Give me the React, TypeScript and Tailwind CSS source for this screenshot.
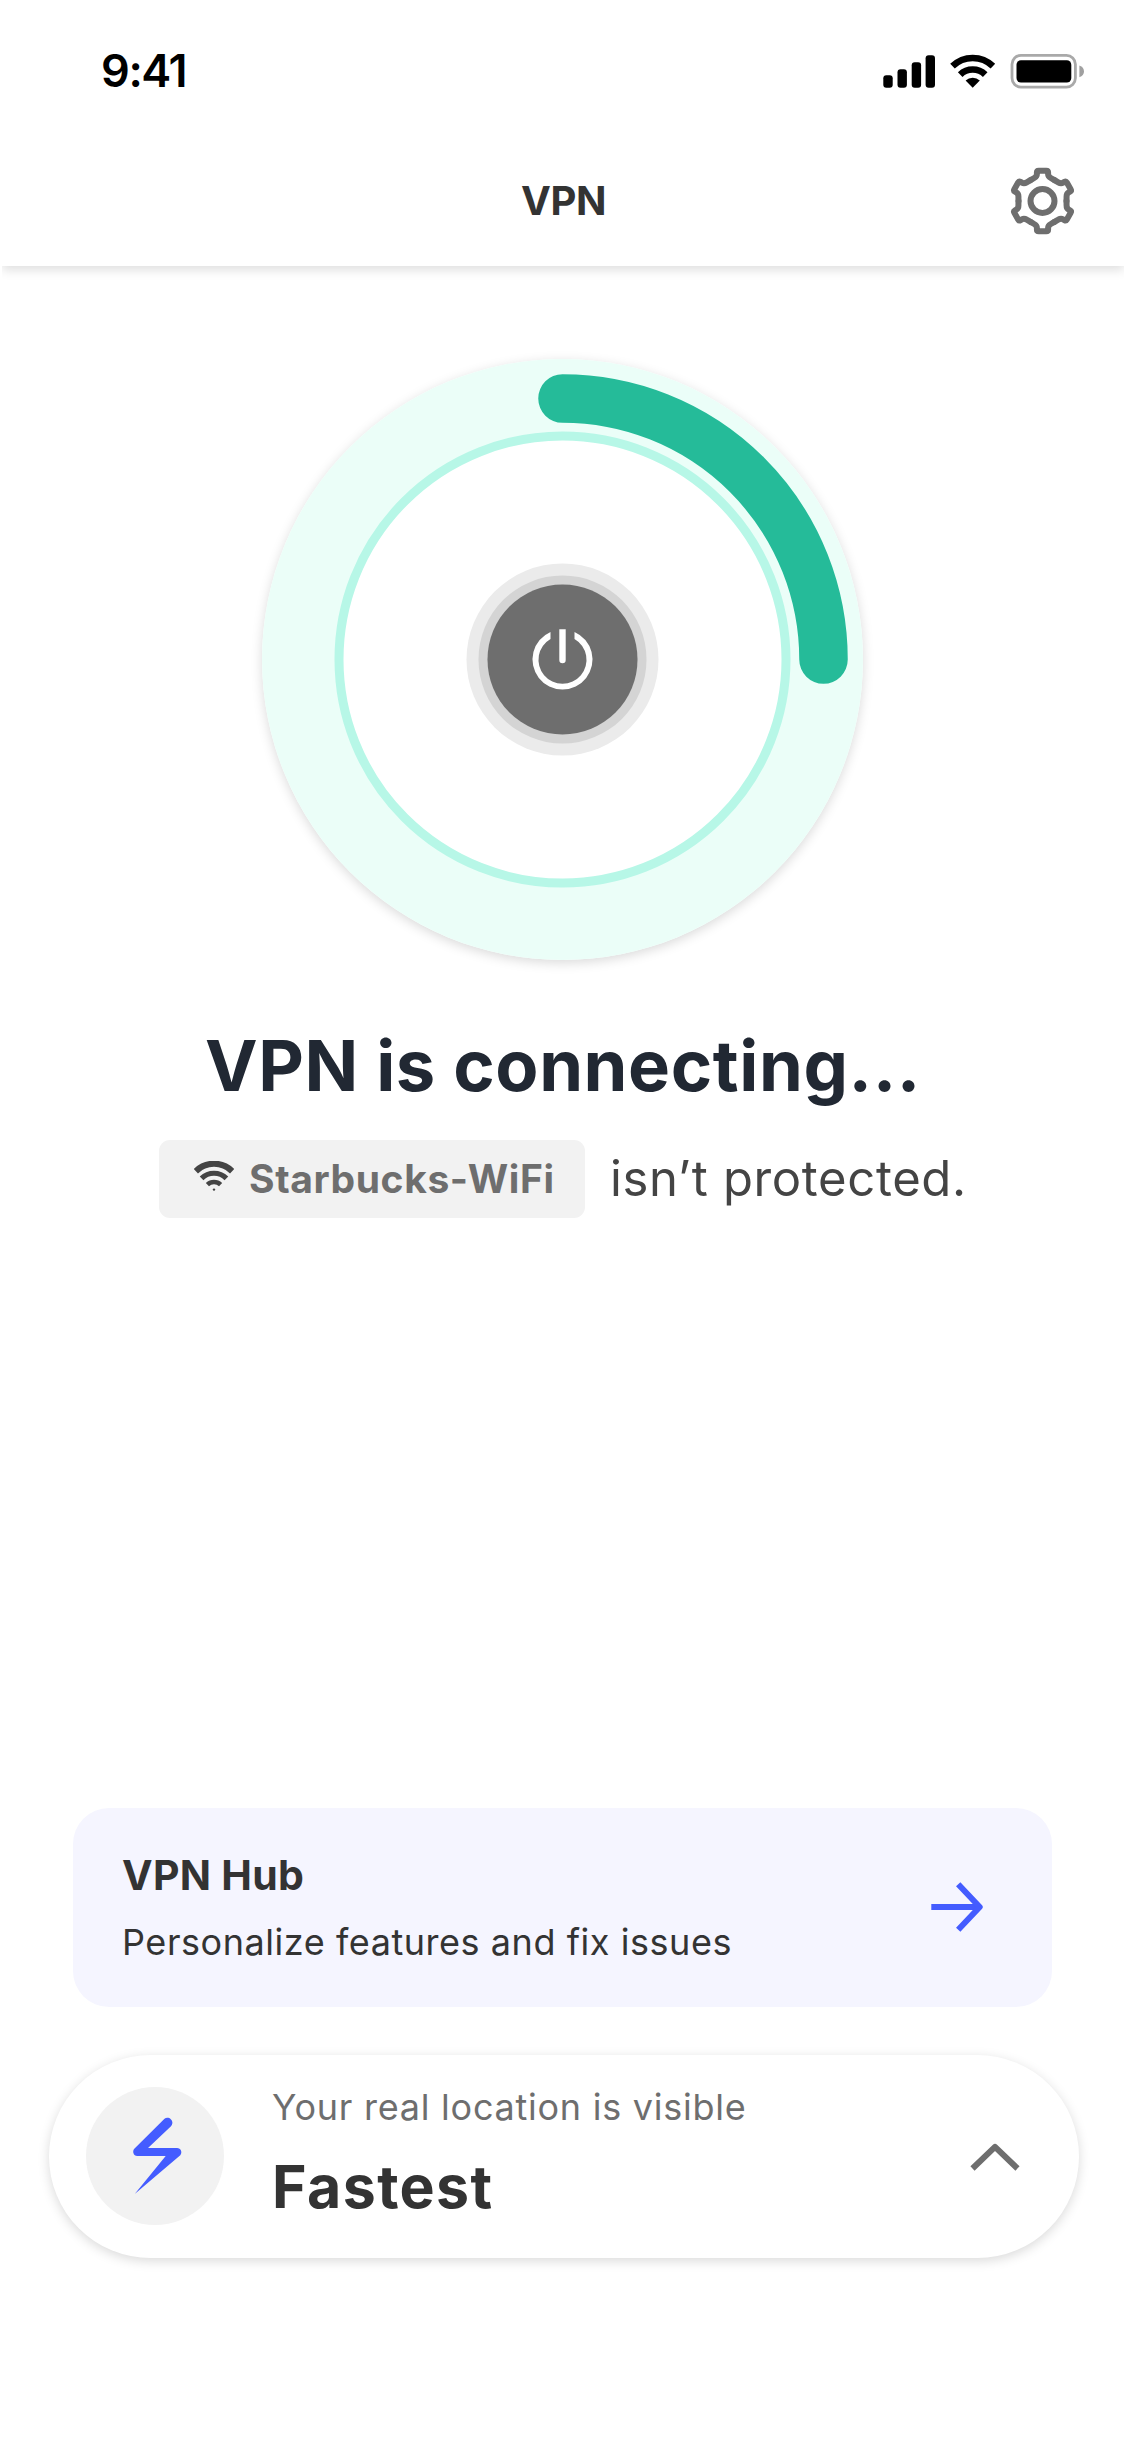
import type { ReactNode } from 'react';

function StatusIcons() {
  return (
    <svg width="202" height="36" viewBox="883 53 202 36" fill="none">
      {/* Signal */}
      <g fill="#000">
        <rect x="883.3" y="75.3" width="9.4" height="12.4" rx="3" />
        <rect x="897.5" y="69.3" width="9.4" height="18.4" rx="3" />
        <rect x="911.7" y="62.3" width="9.4" height="25.4" rx="3" />
        <rect x="925.6" y="55.3" width="9.4" height="32.4" rx="3" />
      </g>
      {/* Wifi */}
      <path d="M952.5 66.2a29 29 0 0 1 40.4 0" stroke="#000" strokeWidth="6.6" />
      <path d="M960.2 74.6a18 18 0 0 1 25 0" stroke="#000" strokeWidth="6.6" />
      <path d="M965.6 80.4a10.5 10.5 0 0 1 14.2 0L972.7 87.7Z" fill="#000" />
      {/* Battery */}
      <rect x="1012" y="55.3" width="63.4" height="31.8" rx="9" stroke="#a9a9a9" strokeWidth="2.8" />
      <rect x="1016.5" y="60.3" width="54.8" height="22.3" rx="4.5" fill="#000" />
      <path d="M1079.4 65.6c3 1.2 4.6 3.2 4.6 5.8s-1.6 4.6-4.6 5.8Z" fill="#a0a0a0" />
    </svg>
  );
}

function GearIcon() {
  const tooth =
    'M-12 -20.8L-8.3 -23Q-5.6 -24.5 -5.6 -27V-28.5Q-5.6 -30.3 -3.8 -30.3H3.8Q5.6 -30.3 5.6 -28.5V-27Q5.6 -24.5 8.3 -23L12 -20.8';
  return (
    <svg width="68" height="68" viewBox="-33.5 -34 68 68" fill="none" stroke="#6e6e6e" strokeWidth="6" strokeLinecap="round">
      {[0, 60, 120, 180, 240, 300].map((deg) => (
        <path key={deg} d={tooth} transform={`rotate(${deg})`} />
      ))}
      <circle r="12" />
    </svg>
  );
}

function Header() {
  return (
    <header className="mx-[2px] h-[266px] bg-white shadow-[0_4px_10px_rgba(0,0,0,0.13)] [clip-path:inset(0_0_-20px_0)]">
      <div className="flex h-[134px] items-center justify-between pt-[7px] pr-[39px] pl-[99px]">
        <span className="text-[45px] leading-[60px] font-semibold tracking-[-1.4px] text-black">9:41</span>
        <StatusIcons />
      </div>
      <div className="flex h-[132px] items-center justify-between pt-[1px] pr-[47px] pl-[48px]">
        <div className="w-[68px]" />
        <h1 className="pt-[1px] text-[40px] leading-[60px] font-bold tracking-[-0.5px] text-[#333333]">VPN</h1>
        <GearIcon />
      </div>
    </header>
  );
}

function PowerDial() {
  return (
    <div className="mt-[93px] ml-[262px] h-[601px] w-[601px] rounded-full shadow-[0_3px_12px_rgba(0,0,0,0.15)]">
      <svg width="601" height="601" viewBox="-300.5 -300.5 601 601" fill="none">
        <circle r="300.5" fill="#ebfef8" />
        <circle r="223.5" fill="#fff" stroke="#b7f7e7" strokeWidth="9" />
        <path d="M0 -261A261 261 0 0 1 261 0" stroke="#25bb99" strokeWidth="48.5" strokeLinecap="round" />
        <circle r="96" fill="#ebebeb" />
        <circle r="84" fill="#d4d4d4" />
        <circle r="75" fill="#6e6e6e" />
        {/* Power glyph */}
        <path d="M-12 -27.5V-20.5A24 24 0 1 0 12 -20.5V-27.5A30 30 0 1 1 -12 -27.5Z" fill="#fff" />
        <path d="M-3.2 -30.3H3.2V0.5A3.2 3.2 0 0 1 -3.2 0.5Z" fill="#fff" />
      </svg>
    </div>
  );
}

function NetworkBadge({ children }: { children: ReactNode }) {
  return (
    <div className="flex h-[78px] w-[426px] items-center rounded-[11px] bg-[#f2f2f2] pl-[35px]">
      <svg className="mb-[7px]" width="40" height="30" viewBox="0 0 40 30" fill="none" stroke="#444444">
        <path d="M1.8 10.2a26 26 0 0 1 36.4 0" strokeWidth="6.2" />
        <path d="M7.6 17.4a17.5 17.5 0 0 1 24.8 0" strokeWidth="5.2" />
        <path d="M13.4 23.6a9.6 9.6 0 0 1 13.2 0" strokeWidth="4.6" />
        <circle cx="20" cy="28.6" r="1.2" fill="#444444" stroke="none" />
      </svg>
      <span className="ml-[15px] text-[39px] leading-[56px] font-bold tracking-[0.6px] whitespace-nowrap text-[#6e6e6e]">
        {children}
      </span>
    </div>
  );
}

function HubCard() {
  return (
    <div className="mt-[590px] mr-[74px] ml-[73px] flex h-[199px] items-start justify-between rounded-[36px] bg-[#f5f5ff] pt-[37px] pr-[69px] pl-[49px]">
      <div>
        <h3 className="text-[41px] leading-[60px] font-bold tracking-[0.3px] text-[#333333]">VPN Hub</h3>
        <p className="mt-[11px] text-[36px] leading-[52px] tracking-[0.55px] whitespace-nowrap text-[#333333]">
          Personalize features and fix issues
        </p>
      </div>
      <svg className="mt-[37px]" width="52" height="50" viewBox="0 0 52 50" fill="none" stroke="#445cff" strokeWidth="6" strokeLinejoin="round">
        <path d="M0.3 25H48" />
        <path d="M27.2 2.3L48.7 25L27.2 47.7" />
      </svg>
    </div>
  );
}

function LocationBar() {
  return (
    <div className="mt-[48px] ml-[49px] flex h-[203px] w-[1030px] items-start rounded-full bg-white pr-[59px] pl-[37px] shadow-[0_3px_12px_rgba(0,0,0,0.15)]">
      <div className="mt-[32px] h-[138px] w-[138px] shrink-0 rounded-full bg-[#f2f2f2]">
        <svg width="138" height="138" viewBox="0 0 138 138" fill="#445cff">
          <path d="M78.5 31.7C81.5 29.4 86.4 31.5 86.4 36C86.3 37.3 85.8 38.3 85 39.2L62 61H91C95 61 96.6 65.5 94.3 68.2L48.7 107L79.7 69H51.2C47.5 69 46 64.5 48.3 61.8Z" />
        </svg>
      </div>
      <div className="mt-[26px] ml-[48px]">
        <p className="text-[36px] leading-[52px] tracking-[0.75px] whitespace-nowrap text-[#6e6e6e]">
          Your real location is visible
        </p>
        <p className="mt-[12px] text-[59px] leading-[84px] font-bold tracking-[1.4px] text-[#333333]">Fastest</p>
      </div>
      <svg className="mt-[88px] ml-auto" width="50" height="28" viewBox="0 0 50 28" fill="none" stroke="#6e6e6e" strokeWidth="6" strokeLinejoin="round">
        <path d="M2.5 25.5L25 3.8L47.5 25.5" />
      </svg>
    </div>
  );
}

export default function App() {
  return (
    <div className="h-[2437px] w-[1126px] overflow-hidden bg-white font-['Inter',sans-serif]">
      <Header />
      <PowerDial />
      <h2 className="mt-[56px] text-center text-[70.5px] leading-[100px] font-bold tracking-[0.6px] whitespace-nowrap text-[#212833]">
        VPN is connecting...
      </h2>
      <div className="mt-[24px] flex items-center pl-[159px]">
        <NetworkBadge>Starbucks-WiFi</NetworkBadge>
        <p className="ml-[25px] text-[49px] leading-[78px] tracking-[0.65px] whitespace-nowrap text-[#444444]">
          isn’t protected.
        </p>
      </div>
      <HubCard />
      <LocationBar />
    </div>
  );
}
